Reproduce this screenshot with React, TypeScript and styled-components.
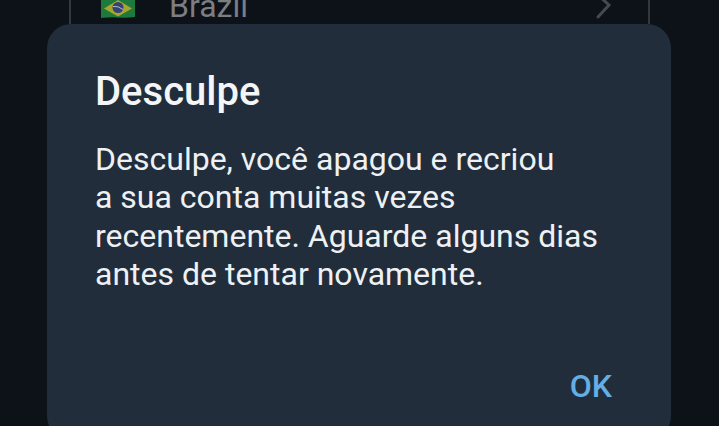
import React from "react";
import styled, { createGlobalStyle } from "styled-components";

const Global = createGlobalStyle`
  html, body { margin: 0; padding: 0; background: #0d1218; }
  #root { width: 719px; height: 426px; overflow: hidden; }
`;

const Page = styled.div`
  width: 719px;
  height: 426px;
  overflow: hidden;
  background: #0d1218;
  font-family: Roboto, "Noto Sans", sans-serif;
`;

const CountryRow = styled.div`
  box-sizing: border-box;
  height: 24px;
  margin: 0 69px;
  border-left: 2px solid #33383e;
  border-right: 2px solid #33383e;
  display: flex;
  align-items: flex-end;
  overflow: hidden;
`;

const FlagSlot = styled.div`
  width: 34px;
  margin-left: 30px;
  height: 18px;
  margin-bottom: 6px;
  flex: none;
`;

const CountryName = styled.span`
  margin-left: 34px;
  font-size: 32px;
  line-height: 38px;
  margin-bottom: -1px;
  color: #7b7e82;
  flex: 1;
`;

const ChevronSlot = styled.div`
  width: 20px;
  height: 26px;
  margin-right: 34px;
  margin-bottom: 2px;
  flex: none;
`;

const Dialog = styled.section`
  box-sizing: border-box;
  margin: 0 48px 0 47px;
  height: 416px;
  border-radius: 24px;
  background: #212d3b;
  padding: 45px 59px 0 48px;
  display: flex;
  flex-direction: column;
`;

const Title = styled.h2`
  margin: 0;
  font-size: 40px;
  line-height: 46px;
  font-weight: 500;
  color: #f3f5f7;
`;

const Message = styled.p`
  margin: 25px 0 0;
  font-size: 32px;
  line-height: 38.3px;
  font-weight: 400;
  color: #eef1f4;
  white-space: nowrap;
`;

const Actions = styled.div`
  display: flex;
  justify-content: flex-end;
  margin-top: 74px;
`;

const OkButton = styled.button`
  border: 0;
  background: none;
  padding: 0;
  font: 500 32px/38px Roboto, "Noto Sans", sans-serif;
  color: #64aee6;
`;

export default function App() {
  return (
    <Page>
      <Global />
      <CountryRow>
        <FlagSlot>
          <svg width="34" height="18" viewBox="0 0 34 18">
            <path d="M0 0 H34 V17 Q26 18 17 17.5 T0 18 Z" fill="#1d7a3c" />
            <path d="M17 0 L31 8.5 L17 16.5 L3 8.5 Z" fill="#a9a52c" />
            <circle cx="17" cy="7.5" r="5.5" fill="#34427a" />
            <path d="M12 6.5 Q17 5.5 22 9.5" stroke="#b9bcc4" strokeWidth="1" fill="none" />
          </svg>
        </FlagSlot>
        <CountryName>Brazil</CountryName>
        <ChevronSlot>
          <svg width="20" height="26" viewBox="0 0 20 26">
            <path d="M4 -1 L15 9 L4 21" stroke="#46494e" strokeWidth="3" fill="none" strokeLinecap="round" />
          </svg>
        </ChevronSlot>
      </CountryRow>
      <Dialog>
        <Title>Desculpe</Title>
        <Message>
          Desculpe, você apagou e recriou
          <br />a sua conta muitas vezes
          <br />recentemente. Aguarde alguns dias
          <br />antes de tentar novamente.
        </Message>
        <Actions>
          <OkButton>OK</OkButton>
        </Actions>
      </Dialog>
    </Page>
  );
}
